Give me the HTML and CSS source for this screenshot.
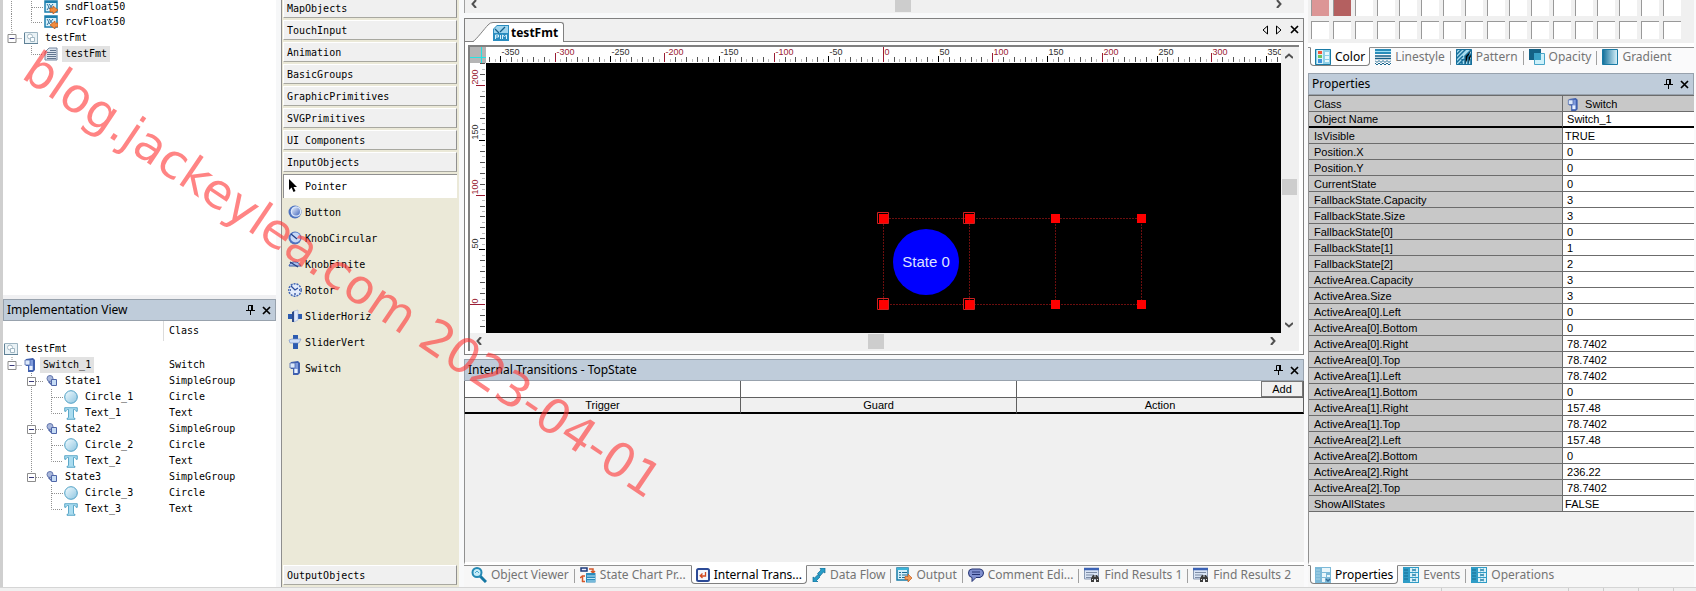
FILE: index.html
```html
<!DOCTYPE html>
<html lang="en">
<head>
<meta charset="utf-8">
<title>testFmt</title>
<link rel="stylesheet" href="styles.css">
</head>
<body>
<svg class="defs" aria-hidden="true">
  <defs>
    <linearGradient id="lgBall" x1="0" y1="0" x2="1" y2="1"><stop offset="0" stop-color="#f4fcff"/><stop offset="1" stop-color="#8cc4e0"/></linearGradient>
    <linearGradient id="lgTeal"><stop offset="0" stop-color="#0f6d99"/><stop offset="1" stop-color="#d9f3fb"/></linearGradient>
    <linearGradient id="lgBlue" x1="0" y1="0" x2="1" y2="1"><stop offset="0" stop-color="#e6eefc"/><stop offset="1" stop-color="#4468bd"/></linearGradient>
  </defs>
  <symbol id="i-float" viewBox="0 0 14 14"><path d="M1 1h12v11H1z" fill="#d8f0fa" stroke="#1c7fae" stroke-width="1.5"/><path d="M1 2h12" stroke="#1c7fae" stroke-width="2"/><path d="M3 4l2 3-2 3M5 4l4 5M9 4L5 9" stroke="#2b6f9c" fill="none"/></symbol>
  <symbol id="i-snd" viewBox="0 0 14 14"><use href="#i-float"/><path d="M6 8h3V6l5 4-5 4v-2H6z" fill="#f28c3e" stroke="#b4541a" stroke-width=".7"/></symbol>
  <symbol id="i-rcv" viewBox="0 0 14 14"><use href="#i-float"/><path d="M14 8h-3V6L6 10l5 4v-2h3z" fill="#f28c3e" stroke="#b4541a" stroke-width=".7"/></symbol>
  <symbol id="i-fmt" viewBox="0 0 14 12"><path d="M.5 .5h13v11H.5z" fill="#e9f2f6" stroke="#9db4c1"/><path d="M.5 12V1M0 11.500h14" stroke="#5f8196"/><circle cx="6" cy="4.500" r="2.500" fill="#fff" stroke="#a3b8c4"/><path d="M6.500 5.500h4v4h-4z" fill="#f9fdff" stroke="#a3b8c4"/></symbol>
  <symbol id="i-doc" viewBox="0 0 14 14"><path d="M5 1h8v12H1V5z" fill="#dce4ee" stroke="#7788a0"/><path d="M6 3.500h6M3 5.500h9M3 7.500h9M3 9.500h9M3 11.500h9" stroke="#61758f"/></symbol>
  <symbol id="i-switch" viewBox="0 0 12 14"><path d="M2 1l7-1 2 2v10l-2 2H4V8H2z" fill="#3f5fae"/><path d="M5 2h4v10H5z" fill="#7f9bdc"/><path d="M1 2h5v5H1z" fill="#dde9fb" stroke="#4b68ad" stroke-width=".8"/><path d="M5.500 8h3v4h-3z" fill="#e9f1ff"/></symbol>
  <symbol id="i-state" viewBox="0 0 12 12"><circle cx="4" cy="3.500" r="3" fill="#a9b8dc" stroke="#6477ad"/><path d="M5.500 4.500h5v6h-5z" fill="#c6dcf5" stroke="#5066a8"/><path d="M2.500 6.500l3 3" stroke="#5066a8" stroke-width="1.500"/></symbol>
  <symbol id="i-circle" viewBox="0 0 14 14"><circle cx="7" cy="7" r="6.300" fill="url(#lgBall)" stroke="#4d9fc4"/></symbol>
  <symbol id="i-text" viewBox="0 0 14 13"><path d="M.7.7h12.600v3.600h-1.300c-.2-1.400-.8-1.800-2.500-1.800v7.700c0 .8.400 1 1.500 1.100v1H3v-1c1.100-.1 1.500-.3 1.500-1.100V2.500C2.800 2.500 2.200 2.900 2 4.300H.7z" fill="#aadcf0" stroke="#3f97bd" stroke-width=".8"/></symbol>
  <symbol id="i-pin" viewBox="0 0 9 10"><path d="M2.500 5.500v-5h4v5M0 5.500h9M4.500 6v4" fill="none" stroke="#000"/><path d="M5 0h2v6H5z"/></symbol>
  <symbol id="i-x" viewBox="0 0 9 9"><path d="M1 1l7 7M8 1L1 8" stroke="#000" stroke-width="1.700"/></symbol>
  <symbol id="i-pointer" viewBox="0 0 14 14"><path d="M1 0v11l2.600-2.500L5.500 13l2-1-2-4H9z"/></symbol>
  <symbol id="i-button" viewBox="0 0 14 14"><circle cx="7" cy="7" r="6.500" fill="#4d72bf"/><circle cx="8" cy="6.500" r="5.300" fill="#dce8fb"/><circle cx="8" cy="6.500" r="4" fill="url(#lgBlue)"/></symbol>
  <symbol id="i-knob" viewBox="0 0 14 14"><circle cx="7" cy="7" r="6.500" fill="#4d72bf"/><circle cx="7.500" cy="6.500" r="5" fill="#c7d9f7"/><path d="M3 3l6 5" stroke="#223f88" stroke-width="1.300"/></symbol>
  <symbol id="i-finite" viewBox="0 0 14 14"><path d="M1 9c1-5 9-6 12 0z" fill="#a9c0ec" stroke="#3e60ac"/><path d="M2 5l8 5" stroke="#263f83" stroke-width="1.300"/></symbol>
  <symbol id="i-rotor" viewBox="0 0 14 14"><circle cx="7" cy="7" r="6.200" fill="#e3ecfb" stroke="#4569b5" stroke-width="1.500" stroke-dasharray="2 1"/><path d="M3 3l4 4 3-2M7 12v-2M2 7h1M11 7h1" stroke="#2b4c9b" fill="none" stroke-width="1.300"/></symbol>
  <symbol id="i-sliderh" viewBox="0 0 14 14"><path d="M0 5h14v5H0z" fill="#2c5bb0"/><path d="M6 2l4-1v10l-4 2z" fill="#dfe9fa" stroke="#8aa3d4" stroke-width=".5"/><path d="M4 3l2-1v11H4z" fill="#2c4a8c"/></symbol>
  <symbol id="i-sliderv" viewBox="0 0 14 14"><path d="M5 0h5v14H5z" fill="#2c5bb0"/><path d="M1 5l3-1h9l-2 4H2z" fill="#cfdef6" stroke="#6d8cc8" stroke-width=".6"/></symbol>
  <symbol id="i-tab" viewBox="0 0 16 16"><path d="M0 4l4-4h12v16H0z" fill="#2a8dc0"/><path d="M1 4l3-3h11v7H1z" fill="#9fd5ee"/><path d="M12 2L7 7M2 4l4 4" stroke="#155f8a" stroke-width="1.300"/><path d="M2.500 14v-4h3v2h-3M7.500 14v-4M9.500 14v-4l2 1.500 2-1.500v4" stroke="#d9f2fc" fill="none"/></symbol>
  <symbol id="i-search" viewBox="0 0 16 16"><path d="M9 9l6 6" stroke="#1577a3" stroke-width="3"/><circle cx="6" cy="5.500" r="4.500" fill="#c5ecf9" stroke="#2489b4" stroke-width="2"/><path d="M4 6l2-2 2 2" stroke="#4aa8cc" fill="none"/></symbol>
  <symbol id="i-chart" viewBox="0 0 16 16"><path d="M1 1h6v3H1z" fill="#eef" stroke="#1d3b7c" stroke-width="1.500"/><path d="M9 2h4v3M11 4l2 2 2-2M5 9H2.500v6M0 11l2.500-2M2 14.500h3" stroke="#d4572a" fill="none" stroke-width="1.500"/><path d="M6 6h9.500v9.500H6z" fill="#2b8bbd"/><path d="M7 9h8M7 11.500h8M7 14h8" stroke="#bfe6f6"/></symbol>
  <symbol id="i-trans" viewBox="0 0 14 14"><rect x="1" y="1" width="12" height="12" rx="1.500" fill="#f3f6fd" stroke="#2c4a96" stroke-width="2"/><path d="M9.500 4v4H4.500M6.500 5.500l-2.300 2.300 2.300 2.200" stroke="#d2481e" fill="none" stroke-width="1.300"/></symbol>
  <symbol id="i-flow" viewBox="0 0 14 14"><path d="M8 0h5v5l-1.500-1L8 8 5.500 5.500 9 2zM6 14H1V9l1.500 1L6 6.500 8 9l-3.500 3.500z" fill="#279dc8" stroke="#136c94" stroke-width=".7"/></symbol>
  <symbol id="i-output" viewBox="0 0 16 16"><path d="M1 1h11v12H1z" fill="#d4effa" stroke="#177ca8" stroke-width="1.500"/><path d="M1 2h11" stroke="#3db4d8" stroke-width="2"/><path d="M3 5.500h2M6 5.500h5M3 8h2M6 8h5M3 10.500h2M6 10.500h3" stroke="#1b6a92"/><path d="M9 9.500h3V7l4 4-4 4v-2.500H9z" fill="#f59a52" stroke="#c05a20" stroke-width=".7"/></symbol>
  <symbol id="i-comment" viewBox="0 0 16 14"><path d="M4 1h8q3.500.5 3.500 4T12 9.500H8L4 13.500V9.500Q.5 9 .5 5T4 1z" fill="#8090cf" stroke="#243372"/><path d="M4 4h8M4 6.500h8" stroke="#243372"/></symbol>
  <symbol id="i-find" viewBox="0 0 16 16"><path d="M.5 2h14v10H.5z" fill="#d9e4f4" stroke="#8898b2"/><path d="M0 2h15" stroke="#3b62b5" stroke-width="2.500"/><path d="M2 5.500h11M2 8h8M2 10.500h5" stroke="#7d8ca5"/><path d="M7 15v-4l2-3h1.500v2h1V8H13l2 3v4h-3v-3h-2v3z" fill="#3c3c3c"/><path d="M8 12.500h1M13 12.500h1" stroke="#ddd"/></symbol>
  <symbol id="i-color" viewBox="0 0 16 16"><path d="M0 0h16v16H0z" fill="#8fd0e8"/><path d="M.5.500h15v15H.5z" fill="none" stroke="#197aa5"/><path d="M2 1h6v14H2z" fill="#d8f2fa"/><path d="M3 2h4v3H3z" fill="#f3573a"/><path d="M3 6h4v3H3z" fill="#6cc45c"/><path d="M3 10h4v4H3z" fill="#3f93dc"/><path d="M10 3h4v3h-4zM10 7h4v3h-4zM10 11h4v2h-4z" fill="#e8f8fc"/></symbol>
  <symbol id="i-line" viewBox="0 0 16 16"><path d="M0 0h16v5H0z" fill="#2a8dba"/><path d="M0 2.500h16" stroke="#9fe0f4"/><path d="M0 7h16M0 9.500h16" stroke="#135e86" stroke-width="1.700"/><path d="M0 11.500l2 2 2-2 2 2 2-2 2 2 2-2 2 2 2-2M0 14l2 2 2-2 2 2 2-2 2 2 2-2 2 2 2-2" stroke="#17658d" fill="none"/></symbol>
  <symbol id="i-pattern" viewBox="0 0 16 16"><path d="M0 0h16v16H0z" fill="#a8dcee"/><path d="M0 6l6-6M0 10L10 0M0 14L7 7M2 16l6-6M6 16v-6M9 16V7l6-6M12 16V8l4-4M15 16v-6M0 2l2-2" stroke="#176f9b" stroke-width="1.500"/><path d="M.5.500h15v15H.5z" fill="none" stroke="#176f9b"/></symbol>
  <symbol id="i-opacity" viewBox="0 0 16 16"><path d="M5.500 4.500h10v11h-10z" fill="#cdf0fa" stroke="#48a5c8"/><path d="M0 0h12v11H0z" fill="#146286"/><path d="M5 4h7v7H5z" fill="#3ba2c7"/></symbol>
  <symbol id="i-gradient" viewBox="0 0 16 16"><path d="M.5.5h15v15H.5z" fill="url(#lgTeal)" stroke="#197aa5"/></symbol>
  <symbol id="i-grid" viewBox="0 0 16 16"><path d="M0 0h16v16H0z" fill="#2f9cc6"/><path d="M7 1h8v4H7zM7 6h8v4H7zM7 11h8v4H7z" fill="#daf2fa"/><path d="M1 3h4M1 6h4M1 9h4M1 12h4" stroke="#156c94"/><path d="M9 2l4 2M13 2L9 4M9 7l4 2M13 7L9 9M9 12l4 2M13 12l-4 2" stroke="#2a84ab"/></symbol>
  <symbol id="i-props" viewBox="0 0 16 16"><path d="M0 0h16v16H0z" fill="#7cb9d8"/><path d="M7 1h8v4H7zM7 6h4v4H7zM12 8h3v2h-3zM7 11h3v4H7z" fill="#e9f6fb"/><path d="M1 3h4M1 6h4M1 9h4M1 12h4" stroke="#a9d5e8"/><path d="M11 12l2 2 2-2" stroke="#346b96" fill="none" stroke-width="1.500"/></symbol>
  <symbol id="c-left" viewBox="0 0 6 8"><path d="M5 0L1.500 4 5 8" fill="none" stroke="#505050" stroke-width="2"/></symbol>
  <symbol id="c-right" viewBox="0 0 6 8"><path d="M1 0l3.500 4L1 8" fill="none" stroke="#505050" stroke-width="2"/></symbol>
  <symbol id="c-up" viewBox="0 0 8 6"><path d="M0 5l4-3.500L8 5" fill="none" stroke="#505050" stroke-width="2"/></symbol>
  <symbol id="c-down" viewBox="0 0 8 6"><path d="M0 1l4 3.500L8 1" fill="none" stroke="#505050" stroke-width="2"/></symbol>
  <symbol id="g-root" viewBox="0 0 19 16"><path class="dots" d="M8.500 0v4M13 8.500h6"/><path class="box" d="M4.500 4.500h8v8h-8z"/><path class="minus" d="M6 8.500h5"/></symbol>
  <symbol id="g-state" viewBox="0 0 42 16"><path class="dots" d="M28.500 0v16M33 8.500h7"/><path class="box" d="M24.500 4.500h8v8h-8z"/><path class="minus" d="M26 8.500h5"/></symbol>
  <symbol id="g-last" viewBox="0 0 42 16"><path class="dots" d="M28.500 0v4M33 8.500h7"/><path class="box" d="M24.500 4.500h8v8h-8z"/><path class="minus" d="M26 8.500h5"/></symbol>
  <symbol id="g-leaf" viewBox="0 0 60 16"><path class="dots" d="M28.500 0v16M48.500 0v16M49 8.500h11"/></symbol>
  <symbol id="g-end" viewBox="0 0 60 16"><path class="dots" d="M28.500 0v16M48.500 0v8.500h11"/></symbol>
  <symbol id="g-leaf0" viewBox="0 0 60 16"><path class="dots" d="M48.500 0v16M49 8.500h11"/></symbol>
  <symbol id="g-end0" viewBox="0 0 60 16"><path class="dots" d="M48.500 0v8.500h11"/></symbol>
</svg>

<main class="workspace">
  <section class="left">
    <div class="tree mono">
      <div class="row"><svg width="40" height="16"><path class="dots" d="M8.500 0v16M28.500 0v16M29 8.500h11"/></svg><svg class="ic" width="14" height="14"><use href="#i-snd"/></svg><span class="name">sndFloat50</span></div>
      <div class="row"><svg width="40" height="16"><path class="dots" d="M8.500 0v16M28.500 0v8.500h11"/></svg><svg class="ic" width="14" height="14"><use href="#i-rcv"/></svg><span class="name">rcvFloat50</span></div>
      <div class="row"><svg width="20" height="16"><use href="#g-root"/></svg><svg class="ic" width="14" height="12"><use href="#i-fmt"/></svg><span class="name">testFmt</span></div>
      <div class="row"><svg width="40" height="16"><path class="dots" d="M28.500 0v8.500h11"/></svg><svg class="ic" width="14" height="14"><use href="#i-doc"/></svg><span class="name picked">testFmt</span></div>
    </div>
    <div class="impl">
      <header class="bar"><h2>Implementation View</h2><button aria-label="Pin"><svg width="9" height="10"><use href="#i-pin"/></svg></button><button aria-label="Close"><svg width="9" height="9"><use href="#i-x"/></svg></button></header>
      <table class="objects mono">
        <thead><tr><th class="c-name"></th><th>Class</th></tr></thead>
        <tbody>
        <tr><td><div class="row"><svg class="ic" width="14" height="12"><use href="#i-fmt"/></svg><span class="name">testFmt</span></div></td><td></td></tr>
        <tr><td><div class="row"><svg width="20" height="16"><use href="#g-root"/></svg><svg class="ic" width="12" height="14"><use href="#i-switch"/></svg><span class="name picked">Switch_1</span></div></td><td>Switch</td></tr>
        <tr><td><div class="row"><svg width="42" height="16"><use href="#g-state"/></svg><svg class="ic" width="12" height="12"><use href="#i-state"/></svg><span class="name">State1</span></div></td><td>SimpleGroup</td></tr>
        <tr><td><div class="row"><svg width="60" height="16"><use href="#g-leaf"/></svg><svg class="ic" width="14" height="14"><use href="#i-circle"/></svg><span class="name">Circle_1</span></div></td><td>Circle</td></tr>
        <tr><td><div class="row"><svg width="60" height="16"><use href="#g-end"/></svg><svg class="ic" width="14" height="13"><use href="#i-text"/></svg><span class="name">Text_1</span></div></td><td>Text</td></tr>
        <tr><td><div class="row"><svg width="42" height="16"><use href="#g-state"/></svg><svg class="ic" width="12" height="12"><use href="#i-state"/></svg><span class="name">State2</span></div></td><td>SimpleGroup</td></tr>
        <tr><td><div class="row"><svg width="60" height="16"><use href="#g-leaf"/></svg><svg class="ic" width="14" height="14"><use href="#i-circle"/></svg><span class="name">Circle_2</span></div></td><td>Circle</td></tr>
        <tr><td><div class="row"><svg width="60" height="16"><use href="#g-end"/></svg><svg class="ic" width="14" height="13"><use href="#i-text"/></svg><span class="name">Text_2</span></div></td><td>Text</td></tr>
        <tr><td><div class="row"><svg width="42" height="16"><use href="#g-last"/></svg><svg class="ic" width="12" height="12"><use href="#i-state"/></svg><span class="name">State3</span></div></td><td>SimpleGroup</td></tr>
        <tr><td><div class="row"><svg width="60" height="16"><use href="#g-leaf0"/></svg><svg class="ic" width="14" height="14"><use href="#i-circle"/></svg><span class="name">Circle_3</span></div></td><td>Circle</td></tr>
        <tr><td><div class="row"><svg width="60" height="16"><use href="#g-end0"/></svg><svg class="ic" width="14" height="13"><use href="#i-text"/></svg><span class="name">Text_3</span></div></td><td>Text</td></tr>
        </tbody>
      </table>
    </div>
  </section>

  <nav class="palette mono">
    <button class="group">MapObjects</button>
    <button class="group">TouchInput</button>
    <button class="group">Animation</button>
    <button class="group">BasicGroups</button>
    <button class="group">GraphicPrimitives</button>
    <button class="group">SVGPrimitives</button>
    <button class="group">UI Components</button>
    <button class="group">InputObjects</button>
    <button class="tool on"><svg width="14" height="14"><use href="#i-pointer"/></svg>Pointer</button>
    <button class="tool"><svg width="14" height="14"><use href="#i-button"/></svg>Button</button>
    <button class="tool"><svg width="14" height="14"><use href="#i-knob"/></svg>KnobCircular</button>
    <button class="tool"><svg width="14" height="14"><use href="#i-finite"/></svg>KnobFinite</button>
    <button class="tool"><svg width="14" height="14"><use href="#i-rotor"/></svg>Rotor</button>
    <button class="tool"><svg width="14" height="14"><use href="#i-sliderh"/></svg>SliderHoriz</button>
    <button class="tool"><svg width="14" height="14"><use href="#i-sliderv"/></svg>SliderVert</button>
    <button class="tool"><svg width="14" height="14"><use href="#i-switch"/></svg>Switch</button>
    <button class="group last">OutputObjects</button>
  </nav>

  <section class="center">
    <div class="scroll-top"><svg width="6" height="8"><use href="#c-left"/></svg><i class="thumb"></i><svg width="6" height="8"><use href="#c-right"/></svg></div>
    <div class="document">
      <div class="doc-tabs">
        <button class="doc-tab"><svg class="slope" width="20" height="20"><path d="M0 20C7 16 12 2 20 0v20z" fill="#fff"/><path d="M0 19.500C3 18 12 6 15 3Q17 .5 20 .5" fill="none" stroke="#808080"/></svg><span><svg width="16" height="16"><use href="#i-tab"/></svg>testFmt</span></button>
        <div class="doc-nav">
          <button aria-label="Previous"><svg width="6" height="10"><path d="M5.500 1v8L1 5z" fill="none" stroke="#000"/></svg></button>
          <button aria-label="Next"><svg width="6" height="10"><path d="M.5 1v8L5 5z" fill="none" stroke="#000"/></svg></button>
          <button aria-label="Close"><svg width="9" height="9"><use href="#i-x"/></svg></button>
        </div>
      </div>
      <div class="editor">
        <svg class="corner" width="16" height="16"><path d="M0 0h16v16H0z" fill="#b5b5b5"/><path d="M11.500 0v16M0 10.500h16" stroke="#23e4e4"/></svg>
        <svg class="ruler-h" id="rulerH"></svg>
        <svg class="ruler-v" id="rulerV"></svg>
        <div class="canvas">
          <svg width="795" height="269">
            <circle cx="440" cy="199" r="33" fill="#00f"/>
            <text x="440" y="204" text-anchor="middle" class="state">State 0</text>
            <path d="M397.500 155.500h258v86h-258zM483.500 155.500v86M569.500 155.500v86" fill="none" stroke="#d81c1c" stroke-dasharray="1 2"/>
            <path d="M391.500 149.500h11v11h-11zM477.500 149.500h11v11h-11zM391.500 235.500h11v11h-11zM477.500 235.500h11v11h-11z" fill="none" stroke="#d02020"/>
            <path d="M393 151h9v9h-9zM479 151h9v9h-9zM565 151h9v9h-9zM651 151h9v9h-9zM393 237h9v9h-9zM479 237h9v9h-9zM565 237h9v9h-9zM651 237h9v9h-9z" fill="#f00"/>
          </svg>
        </div>
        <div class="scroll-v"><svg width="8" height="6"><use href="#c-up"/></svg><i class="thumb"></i><svg width="8" height="6"><use href="#c-down"/></svg></div>
        <div class="scroll-h"><svg width="6" height="8"><use href="#c-left"/></svg><i class="thumb"></i><svg width="6" height="8"><use href="#c-right"/></svg></div>
      </div>
    </div>
    <div class="transitions">
      <header class="bar"><h2>Internal Transitions - TopState</h2><button aria-label="Pin"><svg width="9" height="10"><use href="#i-pin"/></svg></button><button aria-label="Close"><svg width="9" height="9"><use href="#i-x"/></svg></button></header>
      <table class="rules">
        <tbody><tr><td><input aria-labelledby="th-t"></td><td><input aria-labelledby="th-g"></td><td><div class="cell"><input aria-labelledby="th-a"><button class="add">Add</button></div></td></tr>
        <tr><th id="th-t">Trigger</th><th id="th-g">Guard</th><th id="th-a">Action</th></tr></tbody>
      </table>
      <div class="blank"></div>
      <div class="tabs" role="tablist">
        <button role="tab"><svg width="16" height="16"><use href="#i-search"/></svg>Object Viewer</button><i class="sep"></i>
        <button role="tab"><svg width="16" height="16"><use href="#i-chart"/></svg>State Chart Pr...</button>
        <button role="tab" class="on" aria-selected="true"><svg width="14" height="14"><use href="#i-trans"/></svg>Internal Trans...</button>
        <button role="tab"><svg width="14" height="14"><use href="#i-flow"/></svg>Data Flow</button><i class="sep"></i>
        <button role="tab"><svg width="16" height="16"><use href="#i-output"/></svg>Output</button><i class="sep"></i>
        <button role="tab"><svg width="16" height="14"><use href="#i-comment"/></svg>Comment Edi...</button><i class="sep"></i>
        <button role="tab"><svg width="16" height="16"><use href="#i-find"/></svg>Find Results 1</button><i class="sep"></i>
        <button role="tab"><svg width="16" height="16"><use href="#i-find"/></svg>Find Results 2</button>
      </div>
    </div>
  </section>

  <section class="right">
    <div class="swatches">
      <i class="pink"></i><i class="brick"></i><i></i><i></i><i></i><i></i><i></i><i></i><i></i><i></i><i></i><i></i><i></i><i></i><i></i><i></i><i></i>
      <i></i><i></i><i></i><i></i><i></i><i></i><i></i><i></i><i></i><i></i><i></i><i></i><i></i><i></i><i></i><i></i><i></i>
    </div>
    <div class="tabs style-tabs" role="tablist">
      <button role="tab" class="on" aria-selected="true"><svg width="16" height="16"><use href="#i-color"/></svg>Color</button>
      <button role="tab"><svg width="16" height="16"><use href="#i-line"/></svg>Linestyle</button><i class="sep"></i>
      <button role="tab"><svg width="16" height="16"><use href="#i-pattern"/></svg>Pattern</button><i class="sep"></i>
      <button role="tab"><svg width="16" height="16"><use href="#i-opacity"/></svg>Opacity</button><i class="sep"></i>
      <button role="tab"><svg width="16" height="16"><use href="#i-gradient"/></svg>Gradient</button>
    </div>
    <header class="bar"><h2>Properties</h2><button aria-label="Pin"><svg width="9" height="10"><use href="#i-pin"/></svg></button><button aria-label="Close"><svg width="9" height="9"><use href="#i-x"/></svg></button></header>
    <div class="prop-body">
      <table class="props">
        <tr class="class"><th>Class</th><td><span><svg width="12" height="13"><use href="#i-switch"/></svg>Switch</span></td></tr>
        <tr class="thick"><th>Object Name</th><td>Switch_1</td></tr>
        <tr class="flag"><th>IsVisible</th><td>TRUE</td></tr>
        <tr><th>Position.X</th><td>0</td></tr>
        <tr><th>Position.Y</th><td>0</td></tr>
        <tr><th>CurrentState</th><td>0</td></tr>
        <tr><th>FallbackState.Capacity</th><td>3</td></tr>
        <tr><th>FallbackState.Size</th><td>3</td></tr>
        <tr><th>FallbackState[0]</th><td>0</td></tr>
        <tr><th>FallbackState[1]</th><td>1</td></tr>
        <tr><th>FallbackState[2]</th><td>2</td></tr>
        <tr><th>ActiveArea.Capacity</th><td>3</td></tr>
        <tr><th>ActiveArea.Size</th><td>3</td></tr>
        <tr><th>ActiveArea[0].Left</th><td>0</td></tr>
        <tr><th>ActiveArea[0].Bottom</th><td>0</td></tr>
        <tr><th>ActiveArea[0].Right</th><td>78.7402</td></tr>
        <tr><th>ActiveArea[0].Top</th><td>78.7402</td></tr>
        <tr><th>ActiveArea[1].Left</th><td>78.7402</td></tr>
        <tr><th>ActiveArea[1].Bottom</th><td>0</td></tr>
        <tr><th>ActiveArea[1].Right</th><td>157.48</td></tr>
        <tr><th>ActiveArea[1].Top</th><td>78.7402</td></tr>
        <tr><th>ActiveArea[2].Left</th><td>157.48</td></tr>
        <tr><th>ActiveArea[2].Bottom</th><td>0</td></tr>
        <tr><th>ActiveArea[2].Right</th><td>236.22</td></tr>
        <tr><th>ActiveArea[2].Top</th><td>78.7402</td></tr>
        <tr class="flag"><th>ShowAllStates</th><td>FALSE</td></tr>
      </table>
    </div>
    <div class="tabs prop-tabs" role="tablist">
      <button role="tab" class="on" aria-selected="true"><svg width="16" height="16"><use href="#i-props"/></svg>Properties</button>
      <button role="tab"><svg width="16" height="16"><use href="#i-grid"/></svg>Events</button><i class="sep"></i>
      <button role="tab"><svg width="16" height="16"><use href="#i-grid"/></svg>Operations</button>
    </div>
  </section>
</main>
<footer class="status"><i></i><i></i><i></i><i></i><i></i></footer>
<div class="watermark">blog.jackeylea.com 2023-04-01</div>
<script src="rulers.js"></script>
</body>
</html>
```
FILE: styles.css
```css
* { box-sizing: border-box; }
html, body { height: 100%; }
body { margin: 0; display: flex; flex-direction: column; overflow: hidden; position: relative; background: #f6f7f8; color: #000; font-family: "Noto Sans", "Open Sans", sans-serif; font-size: 12px; }
button { font: inherit; color: inherit; background: none; border: 0; padding: 0; margin: 0; }
svg { display: block; flex: none; overflow: visible; }
h2 { margin: 0; font-size: 12px; font-weight: 400; }
i { font-style: normal; }
.defs { position: absolute; width: 0; height: 0; }
.mono { font-family: "DejaVu Sans Mono", "Liberation Mono", monospace; font-size: 10px; }
.dots { fill: none; stroke: #909090; stroke-dasharray: 1 1; }
.box { fill: #fff; stroke: #8c8c8c; }
.minus { stroke: #3a3a7a; }

.workspace { flex: 1; min-height: 0; display: grid; grid-template-columns: 281px 178px minmax(0, 845fr) minmax(0, 392fr); }

.bar { flex: none; height: 22px; display: flex; align-items: center; gap: 7px; padding: 0 4px 0 3px; background: #bfccda; border: 1px solid #98a2ad; }
.bar h2 { flex: 1; line-height: 20px; }

.left { display: flex; flex-direction: column; min-height: 0; padding-right: 5px; border-left: 3px solid #cfcfcf; }
.tree { flex: 1; min-height: 0; overflow: hidden; background: #fff; display: flex; flex-direction: column; justify-content: flex-start; border-bottom: 4px solid #f0f0f2; }
.tree .row:first-child { height: 14px; }
.row { flex: none; display: flex; align-items: center; height: 16px; line-height: 14px; }
.row .ic { margin-left: 1px; }
.row .name { margin-left: 4px; padding: 0 3px; }
.row .picked { background: #e2e2e2; line-height: 16px; }
.impl { flex: 0 0 288px; background: #fff; }
.objects { width: 100%; border-collapse: collapse; table-layout: fixed; text-align: left; line-height: 16px; }
.objects td, .objects th { padding: 0; font-weight: 400; height: 16px; }
.objects th { height: 20px; }
.objects .c-name { width: 166px; background: linear-gradient(#dcdcdc, #dcdcdc) 160px 0 / 1px 100% no-repeat; }

.palette { display: flex; flex-direction: column; gap: 2px; padding: 0 2px 2px 1px; background: #ebe9d8; border-left: 1px solid #8e8e8e; overflow: hidden; }
.palette button { flex: none; text-align: left; }
.palette .group { height: 20px; padding: 1px 0 0 3px; background: #f0f0f0; border: 1px solid #fff; border-right-color: #909090; border-bottom-color: #a8a8a0; line-height: 18px; }
.palette .group:first-child { height: 18px; border-top: 0; line-height: 16px; }
.palette .last { margin-top: auto; }
.tool { height: 24px; display: flex; align-items: center; gap: 3px; padding-left: 5px; }
.tool.on { background: #fff; box-shadow: inset 1px 1px #909090; }

.center { display: flex; flex-direction: column; min-width: 0; padding: 0 0 0 5px; background: #f8f9fa; }
.scroll-top { flex: none; height: 13px; margin-bottom: 5px; display: flex; justify-content: space-between; padding: 0 22px 0 6px; background: #f0f0f0; border-left: 1px solid #a0a0a0; }
.thumb { background: #cdcdcd; }
.scroll-top .thumb { width: 16px; height: 12px; margin-left: 52px; }
.document { flex: 1; min-height: 0; display: flex; flex-direction: column; margin-bottom: 4px; border: 1px solid #808080; background: #fff; }
.doc-tabs { flex: none; height: 23px; display: flex; justify-content: space-between; padding: 3px 4px 0 8px; background: #f0f0f0; border-bottom: 1px solid #808080; }
.doc-tab { display: flex; height: 20px; font-weight: 700; }
.doc-tab span { display: flex; align-items: center; gap: 2px; height: 20px; padding: 0 5px 0 0; background: #fff; border-top: 1px solid #808080; border-right: 1px solid #808080; border-radius: 0 3px 0 0; }
.doc-nav { display: flex; align-items: center; gap: 8px; padding-bottom: 4px; }
.editor { flex: 1; min-height: 0; margin: 3px 4px 3px 3px; display: grid; grid-template: 16px minmax(0, 1fr) 18px / 16px minmax(0, 1fr) 18px; border: solid #808080; border-width: 2px 0 0 2px; background: #f0f0f0; }
.ruler-h, .ruler-v { width: 100%; height: 100%; overflow: hidden; background: #fff; }
.ruler-h { grid-area: 1 / 2; }
.ruler-v { grid-area: 2 / 1; }
.ruler-h text, .ruler-v text { font-family: "Liberation Sans", Arial, sans-serif; font-size: 9px; fill: #303030; }
.ruler-h .red, .ruler-v .red { fill: #9a1c34; }
.canvas { grid-area: 2 / 2; overflow: hidden; background: #000; }
.state { font-family: "Liberation Sans", Arial, sans-serif; font-size: 15px; fill: #dfe2ff; }
.scroll-v { grid-area: 1 / 3 / 3 / 4; display: flex; flex-direction: column; align-items: center; justify-content: space-between; padding: 6px 2px 5px 0; }
.scroll-v .thumb { width: 15px; height: 16px; margin-bottom: 8px; }
.scroll-h { grid-area: 3 / 1 / 4 / 3; display: flex; align-items: center; justify-content: space-between; padding: 0 5px 2px 6px; }
.scroll-h .thumb { width: 16px; height: 15px; }

.transitions { flex: 0 0 228px; display: flex; flex-direction: column; }
.rules { flex: none; width: 100%; table-layout: fixed; border-collapse: separate; border-spacing: 0; border-left: 1px solid #606060; font: 11px/13px "Liberation Sans", Arial, sans-serif; }
.rules td, .rules th { padding: 0; border-right: 1px solid #606060; font-weight: 400; }
.rules td { width: 276px; height: 17px; background: #fff; border-bottom: 1px solid #606060; }
.rules td:last-child { width: auto; }
.rules th { height: 16px; padding-top: 1px; background: #f0f0f0; border-bottom: 2px solid #000; }
.rules input { display: block; width: 100%; height: 16px; border: 0; padding: 0 2px; font: inherit; background: #fff; }
.cell { display: flex; }
.cell input { flex: 1; min-width: 0; }
.add { flex: none; width: 42px; height: 16px; background: #f0f0f0; border: 1px solid #777; }
.blank { flex: 1; background: #f0f0f0; border-left: 1px solid #909090; border-bottom: 3px solid #fff; }

.tabs { flex: none; height: 22px; display: flex; align-items: flex-start; border-top: 1px solid #909090; padding-left: 2px; color: #747474; background: #f7f7f7; }
.tabs button { display: flex; align-items: center; gap: 4px; height: 18px; padding: 0 5px; line-height: 18px; white-space: nowrap; }
.tabs .on { color: #000; background: #fff; border: 1px solid #808080; border-top-color: #fff; border-radius: 0 0 4px 4px; margin-top: -1px; height: 19px; padding: 0 4px; }
.sep { width: 1px; height: 14px; margin-top: 3px; background: #a0a0a0; }

.right { display: flex; flex-direction: column; min-width: 0; padding: 0 2px 0 4px; background: #fafafb; }
.swatches { flex: none; height: 47px; display: grid; grid-template-columns: repeat(17, 18px); grid-template-rows: 16px 18px; gap: 5px 4px; padding-left: 3px; background: #f0f0f0; border-bottom: 4px solid #fff; overflow: hidden; }
.swatches i { background: #fff; border: solid #999; border-width: 1px 0 0 1px; }
.swatches i:nth-child(-n+17) { border-top: 0; }
.swatches .pink { background: #dc9696; }
.swatches .brick { background: #b46060; }
.style-tabs { height: 26px; background: #fafafb; }
.prop-body { flex: 1; min-height: 0; background: #f0f0f0; border-left: 1px solid #909090; border-top: 1px solid #6c6c6c; border-bottom: 3px solid #fff; }
.props { width: 100%; table-layout: fixed; border-collapse: separate; border-spacing: 0; font: 11px/13px "Liberation Sans", Arial, sans-serif; }
.props th, .props td { height: 16px; padding: 1px 0 0 5px; border-bottom: 1px solid #6c6c6c; font-weight: 400; text-align: left; }
.props th { width: 66%; background: #c8c8c8; border-right: 1px solid #6c6c6c; }
.props td { padding-left: 4px; background: #fff; }
.props .class td { background: #c8c8c8; }
.props .class span { display: flex; gap: 6px; height: 13px; }
.props .thick th, .props .thick td { border-bottom: 2px solid #000; }
.props .flag td { padding-left: 2px; }

.status { flex: none; height: 4px; display: flex; justify-content: flex-end; gap: 34px; padding-right: 22px; background: #f0f0f0; border-top: 1px solid #d5d5d5; }
.status i { width: 1px; background: #ccc; }
.status i:first-child { margin-right: 92px; }

.watermark { position: absolute; left: 20px; top: 32px; font: 48px/56px "DejaVu Sans", sans-serif; white-space: nowrap; color: rgba(255, 50, 50, .6); transform: rotate(34deg); transform-origin: 0 45px; pointer-events: none; }
```
FILE: rulers.js
```js
const SCALE = 1.094;

// Builds the ticks and labels of one ruler; `origin` is the pixel of value 0.
function drawRuler(svg, origin, from, to, vertical) {
  let out = "";
  for (let v = from; v <= to; v += 5) {
    const p = Math.round(vertical ? origin - v * SCALE : origin + v * SCALE) + 0.5;
    const hundred = v % 100 === 0;
    const fifty = v % 50 === 0;
    const len = v === 0 ? 15 : hundred ? 9 : fifty ? 6 : v % 10 === 0 ? 5 : 3;
    const color = hundred ? "#9a1c34" : fifty ? "#000" : v % 10 === 0 ? "#555" : "#bbb";
    out += vertical
      ? `<path d="M15 ${p}h-${len}" stroke="${color}"/>`
      : `<path d="M${p} 15v-${len}" stroke="${color}"/>`;
    if (fifty) {
      const cls = hundred ? ' class="red"' : "";
      out += vertical
        ? `<text${cls} transform="translate(8 ${p - 1}) rotate(-90)">${v}</text>`
        : `<text${cls} x="${p + 1}" y="8">${v}</text>`;
    }
  }
  svg.innerHTML = out;
}

drawRuler(document.getElementById("rulerH"), 397, -360, 360, false);
drawRuler(document.getElementById("rulerV"), 241, -20, 220, true);
```
